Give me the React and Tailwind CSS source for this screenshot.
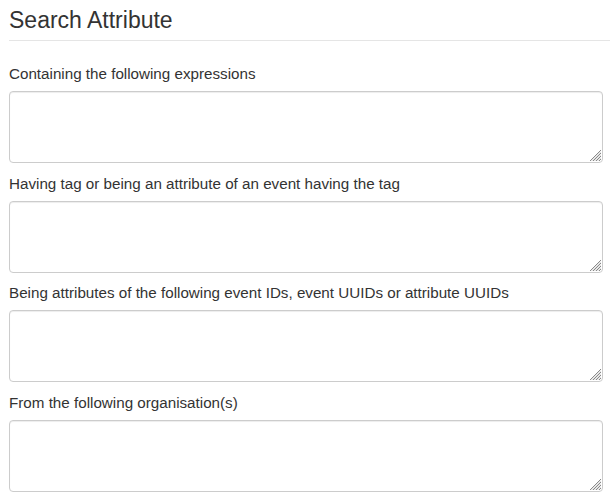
const fields = [
  'Containing the following expressions',
  'Having tag or being an attribute of an event having the tag',
  'Being attributes of the following event IDs, event UUIDs or attribute UUIDs',
  'From the following organisation(s)',
]

// hatched resize grip like the reference's browser
function Grip() {
  return (
    <svg className="pointer-events-none absolute bottom-[2px] right-[2px]" width="12" height="12" viewBox="0 0 12 12">
      <g stroke="#8a8a8a" strokeWidth="1">
        <line x1="12" y1="1" x2="1" y2="12" />
        <line x1="12" y1="4" x2="4" y2="12" />
        <line x1="12" y1="7" x2="7" y2="12" />
        <line x1="12" y1="10" x2="10" y2="12" />
      </g>
      <g stroke="#d0d0d0" strokeWidth="1">
        <line x1="12" y1="2.5" x2="2.5" y2="12" />
        <line x1="12" y1="5.5" x2="5.5" y2="12" />
        <line x1="12" y1="8.5" x2="8.5" y2="12" />
      </g>
    </svg>
  )
}

export default function App() {
  return (
    <div className="min-h-screen bg-white pl-[9px] text-[#333] font-['Liberation_Sans',Arial,sans-serif]">
      <div className="mb-[23px] border-b border-[#e5e5e5] text-[23px] leading-[40px]">Search Attribute</div>
      {fields.map(f => (
        <div key={f}>
          <label className="mb-[7px] block text-[15.2px] leading-[20px]">{f}</label>
          <div className="relative mb-[10.67px] w-[594px]">
            <textarea className="block h-[72px] w-full resize-none rounded-[4px] border border-[#ccc] px-[6px] py-[4px] text-[14px] shadow-[inset_0_1px_1px_rgba(0,0,0,0.075)] outline-none" />
            <Grip />
          </div>
        </div>
      ))}
    </div>
  )
}
